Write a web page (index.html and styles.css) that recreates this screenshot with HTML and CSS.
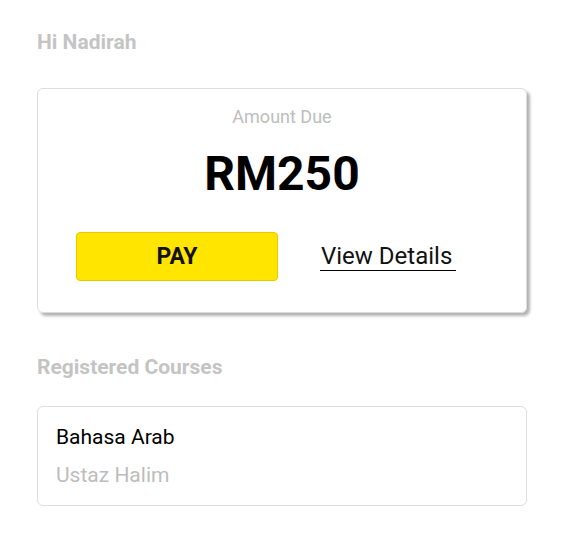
FILE: index.html
```html
<!DOCTYPE html>
<html>
<head>
<meta charset="utf-8">
<link rel="stylesheet" href="styles.css">
</head>
<body>
<div class="page">
  <h2 class="greeting">Hi Nadirah</h2>
  <div class="due-card">
    <div class="due-label">Amount Due</div>
    <div class="due-amount">RM250</div>
    <div class="due-actions">
      <button class="pay-btn">PAY</button>
      <div class="details-wrap"><a class="details-link">View Details</a></div>
    </div>
  </div>
  <h2 class="section-title">Registered Courses</h2>
  <div class="course-card">
    <div class="course-name">Bahasa Arab</div>
    <div class="course-teacher">Ustaz Halim</div>
  </div>
</div>
</body>
</html>
```

FILE: styles.css
```css
html, body {
  margin: 0;
  padding: 0;
  background: #ffffff;
  font-family: Roboto, "Noto Sans", sans-serif;
}
.page {
  padding: 30px 37px 0 37px;
  display: flex;
  flex-direction: column;
}
.greeting, .section-title {
  margin: 0;
  font-size: 21px;
  font-weight: 700;
  color: #c4c4c4;
  line-height: 24px;
}
.due-card {
  margin-top: 34px;
  height: 225px;
  box-sizing: border-box;
  border: 1px solid #dcdcdc;
  border-radius: 6px;
  box-shadow: 3px 3px 3px rgba(0,0,0,0.3);
  display: flex;
  flex-direction: column;
  align-items: center;
  padding-top: 18px;
}
.due-label {
  font-size: 18px;
  color: #bdbdbd;
  line-height: 20px;
}
.due-amount {
  margin-top: 27px;
  font-size: 48px;
  font-weight: 700;
  color: #000;
  line-height: 40px;
}
.due-actions {
  margin-top: 38px;
  width: 100%;
  display: flex;
  align-items: center;
  padding-left: 38px;
  box-sizing: border-box;
}
.pay-btn {
  width: 202px;
  height: 49px;
  background: #ffe500;
  border: 1px solid #e8c900;
  border-radius: 4px;
  font-family: Roboto, sans-serif;
  font-size: 23px;
  font-weight: 700;
  color: #111;
  padding: 0;
}
.details-wrap {
  margin-left: 42px;
  padding-top: 1px;
}
.details-link {
  font-size: 24px;
  color: #111;
  display: inline-block;
  line-height: 26px;
  padding-right: 4px;
  padding-left: 1px;
  padding-bottom: 1px;
  border-bottom: 1.5px solid #000;
}
.section-title {
  margin-top: 42px;
}
.course-card {
  margin-top: 27px;
  height: 100px;
  box-sizing: border-box;
  border: 1px solid #dcdcdc;
  border-radius: 6px;
  padding: 18px 18px 0 18px;
  display: flex;
  flex-direction: column;
}
.course-name {
  font-size: 21px;
  color: #000;
  line-height: 24px;
}
.course-teacher {
  margin-top: 14px;
  font-size: 21px;
  color: #bdbdbd;
  line-height: 24px;
}
```
